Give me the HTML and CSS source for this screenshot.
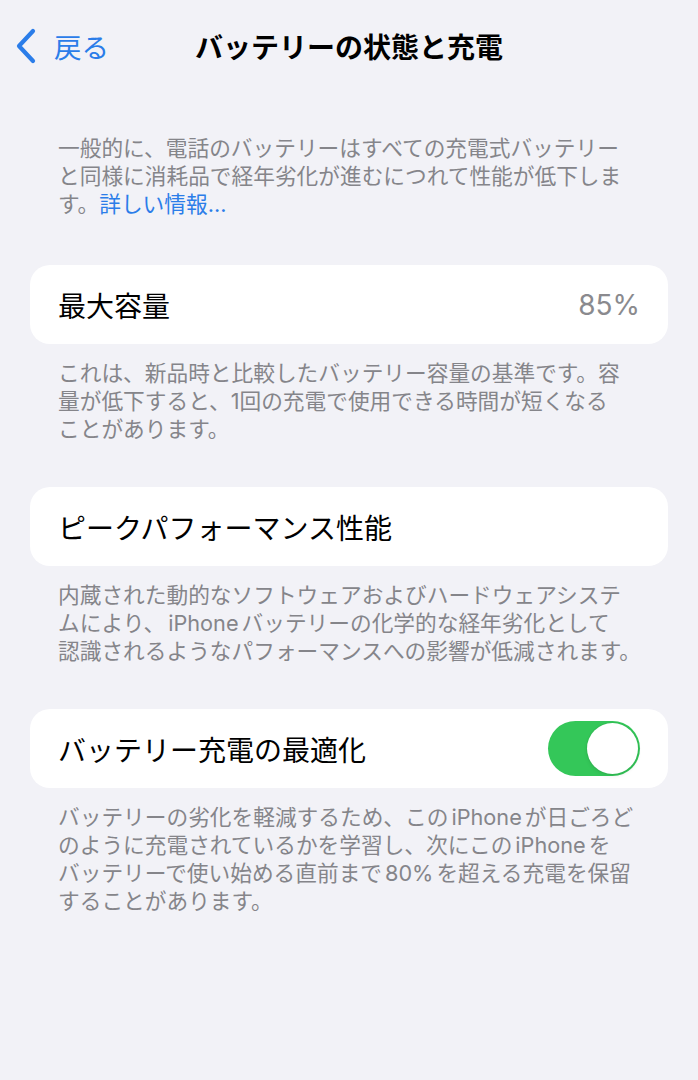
FILE: index.html
```html
<!DOCTYPE html>
<html lang="ja">
<head>
  <meta charset="UTF-8">
  <meta name="viewport" content="width=device-width, initial-scale=1.0">
  <title>バッテリーの状態と充電</title>
  <link rel="stylesheet" href="styles.css">
</head>
<body>
  <header class="nav-bar">
    <a class="back-btn" href="#">
      <svg class="back-chevron" viewBox="0 0 22 36"><path d="M18 3 L4 18 L18 33"/></svg>
      <span>戻る</span>
    </a>
    <h1 class="nav-title">バッテリーの状態と充電</h1>
    <span></span>
  </header>

  <main class="settings">
    <p class="note intro">一般的に、電話のバッテリーはすべての充電式バッテリー<br>と同様に消耗品で経年劣化が進むにつれて性能が低下しま<br>す。<a class="note-link" href="#">詳しい情報...</a></p>

    <section class="group">
      <div class="cell">
        <span class="cell-label">最大容量</span>
        <span class="cell-value">85%</span>
      </div>
      <p class="note">これは、新品時と比較したバッテリー容量の基準です。容<br>量が低下すると、1回の充電で使用できる時間が短くなる<br>ことがあります。</p>
    </section>

    <section class="group">
      <div class="cell">
        <span class="cell-label">ピークパフォーマンス性能</span>
      </div>
      <p class="note">内蔵された動的なソフトウェアおよびハードウェアシステ<br>ムにより、<span class="latin">iPhone</span>バッテリーの化学的な経年劣化として<br>認識されるようなパフォーマンスへの影響が低減されます。</p>
    </section>

    <section class="group">
      <div class="cell">
        <span class="cell-label">バッテリー充電の最適化</span>
        <span class="switch is-on"><span class="switch-knob"></span></span>
      </div>
      <p class="note">バッテリーの劣化を軽減するため、この<span class="latin">iPhone</span>が日ごろど<br>のように充電されているかを学習し、次にこの<span class="latin">iPhone</span>を<br>バッテリーで使い始める直前まで<span class="latin">80%</span>を超える充電を保留<br>することがあります。</p>
    </section>
  </main>
</body>
</html>
```

FILE: styles.css
```css
body {
  margin: 0;
  background: #f2f2f7;
  font-family: "Inter", "Noto Sans CJK JP", sans-serif;
  color: #000;
}
.nav-bar {
  display: grid;
  grid-template-columns: 1fr auto 1fr;
  align-items: center;
  height: 92px;
}
.back-btn {
  display: flex;
  align-items: center;
  gap: 17px;
  padding-left: 15px;
  color: #2b7de9;
  text-decoration: none;
  font-size: 27.5px;
}
.back-chevron {
  width: 22px;
  height: 36px;
  fill: none;
  stroke: currentColor;
  stroke-width: 4.2;
  stroke-linecap: round;
  stroke-linejoin: round;
}
.nav-title {
  margin: 0;
  font-size: 28px;
  font-weight: 600;
}
.settings {
  padding-bottom: 40px;
}
.note {
  margin: 15px 0 0 0;
  padding: 0 30px 0 58px;
  font-size: 21.7px;
  line-height: 28px;
  color: #85858a;
  white-space: nowrap;
}
.note.intro {
  margin: 42px 0 0 0;
}
.note-link {
  color: #2b7de9;
  text-decoration: none;
}
/* iOS puts a little air between Latin words and kana */
.latin {
  margin: 0 3px;
}
.group {
  margin-top: 44px;
}
.intro + .group {
  margin-top: 47px;
}
.cell {
  display: flex;
  align-items: center;
  justify-content: space-between;
  height: 79px;
  margin: 0 30px;
  padding: 0 28px;
  background: #fff;
  border-radius: 20px;
}
.cell-label {
  font-size: 28px;
}
.cell-value {
  font-size: 28px;
  color: #8a8a8e;
}
.switch {
  display: flex;
  align-items: center;
  justify-content: flex-end;
  width: 92px;
  height: 55px;
  padding: 2px;
  box-sizing: border-box;
  border-radius: 28px;
  background: #e9e9eb;
}
.switch.is-on {
  background: #34c759;
}
.switch-knob {
  width: 51px;
  height: 51px;
  border-radius: 50%;
  background: #fff;
  box-shadow: 0 0 0 1px rgba(0,0,0,0.04), 0 2px 4px rgba(0,0,0,0.08);
}
```
